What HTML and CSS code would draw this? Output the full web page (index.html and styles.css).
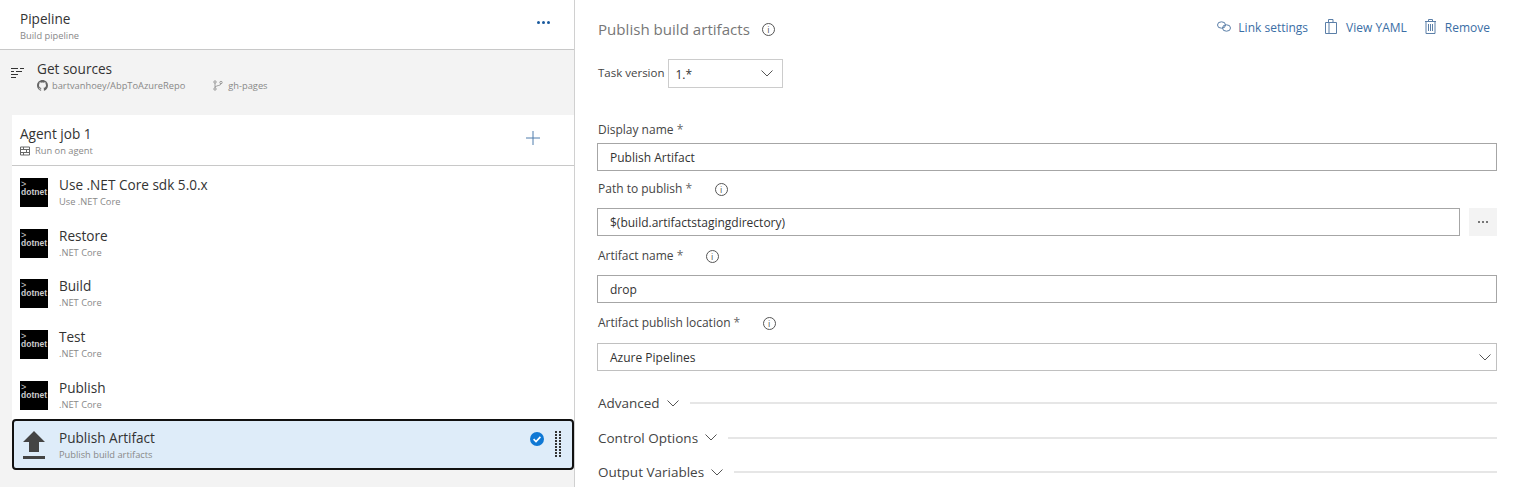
FILE: index.html
```html
<!DOCTYPE html>
<html lang="en">
<head>
    <meta charset="UTF-8">
    <title>Pipeline</title>
    <link rel="stylesheet" href="styles.css">
</head>
<body>
    <div class="left-pane">
        <div class="pipeline-head">
            <div>
                <div class="title">Pipeline</div>
                <div class="sub">Build pipeline</div>
            </div>
            <div class="more-dots"><i></i><i></i><i></i></div>
        </div>
        <div class="sources">
            <svg class="sources-icon" width="13" height="11" viewBox="0 0 13 11" fill="none" stroke="#333" stroke-width="1">
                <path d="M0 1.500h7M9 1.500h4M0 4.500h3M5 4.500h6M0 7.500h7M0 10.500h5"/>
            </svg>
            <div>
                <div class="title">Get sources</div>
                <div class="sub source-meta">
                    <svg class="meta-icon" width="11" height="11" viewBox="0 0 16 16" fill="#666">
                        <path d="M8 0C3.6 0 0 3.6 0 8c0 3.5 2.3 6.5 5.5 7.6.4.1.5-.2.5-.4v-1.4c-2.2.5-2.7-1-2.7-1-.4-.9-.9-1.2-.9-1.2-.7-.5.1-.5.1-.5.8.1 1.2.8 1.2.8.7 1.2 1.9.9 2.3.7.1-.5.3-.9.5-1.1-1.8-.2-3.6-.9-3.6-4 0-.9.3-1.6.8-2.1-.1-.2-.4-1 .1-2.1 0 0 .7-.2 2.2.8.6-.2 1.3-.3 2-.3s1.4.1 2 .3c1.500-1 2.2-.8 2.2-.8.4 1.1.2 1.9.1 2.1.5.6.8 1.3.8 2.1 0 3.1-1.9 3.7-3.7 3.9.3.3.6.8.6 1.5v2.2c0 .2.1.5.6.4C13.7 14.5 16 11.5 16 8c0-4.4-3.6-8-8-8z"/>
                    </svg>
                    <span class="repo">bartvanhoey/AbpToAzureRepo</span>
                    <svg class="meta-icon branch-icon" width="10" height="11" viewBox="0 0 10 11" fill="none" stroke="#888" stroke-width=".8">
                        <circle cx="2" cy="2" r="1.2"/><circle cx="2" cy="9" r="1.2"/><circle cx="8" cy="2.5" r="1.2"/>
                        <path d="M2 3.2v4.6M8 3.7c0 2-4 1.5-6 3.3"/>
                    </svg>
                    <span>gh-pages</span>
                </div>
            </div>
        </div>
        <div class="job-card">
            <div class="job-head">
                <div>
                    <div class="title">Agent job 1</div>
                    <div class="sub source-meta">
                        <svg class="job-icon" width="10" height="10" viewBox="0 0 10 10" fill="none" stroke="#666" stroke-width="1">
                            <path d="M.5 1h9v8h-9zM.5 3.500h9M.5 6.500h9M3.500 1v2.500M6.500 3.500v3M3.500 6.500V9"/>
                        </svg>
                        <span>Run on agent</span>
                    </div>
                </div>
                <svg class="add-icon" width="14" height="14" viewBox="0 0 14 14" stroke="#4f7cac" stroke-width="1"><path d="M7 0v14M0 7h14"/></svg>
            </div>
            <div class="task">
                <div class="dotnet"><span class="prompt">&gt;</span><span class="dotnet-word">dotnet</span></div>
                <div><div class="title">Use .NET Core sdk 5.0.x</div><div class="sub">Use .NET Core</div></div>
            </div>
            <div class="task">
                <div class="dotnet"><span class="prompt">&gt;</span><span class="dotnet-word">dotnet</span></div>
                <div><div class="title">Restore</div><div class="sub">.NET Core</div></div>
            </div>
            <div class="task">
                <div class="dotnet"><span class="prompt">&gt;</span><span class="dotnet-word">dotnet</span></div>
                <div><div class="title">Build</div><div class="sub">.NET Core</div></div>
            </div>
            <div class="task">
                <div class="dotnet"><span class="prompt">&gt;</span><span class="dotnet-word">dotnet</span></div>
                <div><div class="title">Test</div><div class="sub">.NET Core</div></div>
            </div>
            <div class="task">
                <div class="dotnet"><span class="prompt">&gt;</span><span class="dotnet-word">dotnet</span></div>
                <div><div class="title">Publish</div><div class="sub">.NET Core</div></div>
            </div>
            <div class="task task-selected">
                <svg class="upload-icon" width="22" height="28" viewBox="0 0 22 28" fill="#444">
                    <path d="M11 0 22 11H16V21H6V11H0z"/><rect x="0" y="25" width="22" height="3"/>
                </svg>
                <div class="task-text"><div class="title">Publish Artifact</div><div class="sub">Publish build artifacts</div></div>
                <svg class="check-icon" width="14" height="14" viewBox="0 0 14 14">
                    <circle cx="7" cy="7" r="7" fill="#0f78d4"/>
                    <path d="M3.600 7.200 6 9.500l4.400-4.600" fill="none" stroke="#fff" stroke-width="1.600"/>
                </svg>
                <div class="grip"><i></i><i></i><i></i><i></i><i></i><i></i><i></i><i></i><i></i><i></i><i></i><i></i><i></i><i></i><i></i><i></i><i></i><i></i></div>
            </div>
        </div>
    </div>

    <div class="right-pane">
        <div class="task-head">
            <div class="heading">
                <span>Publish build artifacts</span>
                <span class="info info-head">i</span>
            </div>
            <div class="actions">
                <a class="action action-link">
                    <svg width="14" height="11" viewBox="0 0 14 11" fill="none" stroke="#5b7fa8" stroke-width="1">
                        <ellipse cx="4.500" cy="4" rx="4" ry="3.200"/><ellipse cx="9.500" cy="7" rx="4" ry="3.200"/>
                    </svg>
                    Link settings
                </a>
                <a class="action">
                    <svg width="12" height="15" viewBox="0 0 12 15" fill="none" stroke="#5b7fa8" stroke-width="1">
                        <path d="M.5 3.500h11v11H.5zM4 3.500v11M3.500 3.500v-3h4.500v3"/>
                    </svg>
                    View YAML
                </a>
                <a class="action">
                    <svg width="11" height="15" viewBox="0 0 11 15" fill="none" stroke="#5b7fa8" stroke-width="1">
                        <path d="M0 2.500h11M3.500 2.500v-2h4v2M1 2.500v12h9v-12M3.500 5v7M5.500 5v7M7.500 5v7"/>
                    </svg>
                    Remove
                </a>
            </div>
        </div>

        <div class="version-row">
            <label class="label version-label">Task version</label>
            <div class="version-select">
                <span class="version-value">1.*</span>
                <svg class="chevron" width="12" height="7" viewBox="0 0 12 7" fill="none" stroke="#555" stroke-width="1"><path d="M.5.5 6 6l5.500-5.500"/></svg>
            </div>
        </div>

        <div class="field field-first">
            <div class="label">Display name <span class="req">*</span></div>
            <div class="input">Publish Artifact</div>
        </div>
        <div class="field field-path">
            <div class="label">Path to publish <span class="req">*</span><span class="info">i</span></div>
            <div class="path-row">
                <div class="input">$(build.artifactstagingdirectory)</div>
                <div class="browse"><i></i><i></i><i></i></div>
            </div>
        </div>
        <div class="field field-name">
            <div class="label">Artifact name <span class="req">*</span><span class="info">i</span></div>
            <div class="input">drop</div>
        </div>
        <div class="field field-loc">
            <div class="label">Artifact publish location <span class="req">*</span><span class="info">i</span></div>
            <div class="input input-select">
                <span>Azure Pipelines</span>
                <svg class="chevron" width="12" height="7" viewBox="0 0 12 7" fill="none" stroke="#555" stroke-width="1"><path d="M.5.5 6 6l5.500-5.500"/></svg>
            </div>
        </div>

        <div class="section section-first">
            <span>Advanced</span>
            <svg width="12" height="7" viewBox="0 0 12 7" fill="none" stroke="#555" stroke-width="1"><path d="M.5.5 6 6l5.500-5.500"/></svg>
            <div class="rule"></div>
        </div>
        <div class="section">
            <span>Control Options</span>
            <svg width="12" height="7" viewBox="0 0 12 7" fill="none" stroke="#555" stroke-width="1"><path d="M.5.5 6 6l5.500-5.500"/></svg>
            <div class="rule"></div>
        </div>
        <div class="section">
            <span>Output Variables</span>
            <svg width="12" height="7" viewBox="0 0 12 7" fill="none" stroke="#555" stroke-width="1"><path d="M.5.5 6 6l5.500-5.500"/></svg>
            <div class="rule"></div>
        </div>
    </div>
</body>
</html>
```

FILE: styles.css
```css
html, body {
    height: 100%;
}
body {
    margin: 0;
    display: flex;
    height: 487px;
    overflow: hidden;
    font-family: 'Open Sans', sans-serif;
    font-size: 12px;
    color: #333;
    background: #fff;
}
.left-pane {
    width: 574px;
    background: #f3f3f3;
    border-right: 1px solid #d0d0d0;
    flex-shrink: 0;
}
.title {
    font-size: 13.600px;
    line-height: 17px;
    margin: -1px 0 1px;
    color: #333;
}
.sub {
    font-size: 9.300px;
    line-height: 15px;
    color: #888;
}
.pipeline-head {
    height: 50px;
    box-sizing: border-box;
    background: #fff;
    border-bottom: 1px solid #c8c8c8;
    padding: 11px 24px 0 20px;
    display: flex;
    justify-content: space-between;
}
.more-dots {
    display: flex;
    gap: 2px;
    padding-top: 10px;
}
.more-dots i {
    width: 3px;
    height: 3px;
    border-radius: 50%;
    background: #1a5a9e;
}
.sources {
    height: 65px;
    box-sizing: border-box;
    padding: 11px 0 0 11px;
    display: flex;
    gap: 13px;
}
.sources-icon {
    margin-top: 6px;
}
.source-meta {
    display: flex;
    align-items: center;
    margin-top: 1px;
}
.meta-icon {
    margin-right: 4px;
}
.repo {
    margin-right: 28px;
}
.branch-icon {
    margin-right: 5px;
}
.job-head .source-meta {
    margin-top: 0;
}
.job-icon {
    margin-right: 5px;
}
.job-card {
    margin-left: 12px;
    background: #fff;
}
.job-head {
    height: 51px;
    box-sizing: border-box;
    border-bottom: 1px solid #c8c8c8;
    padding: 11px 34px 0 8px;
    display: flex;
    justify-content: space-between;
}
.add-icon {
    margin-top: 5px;
}
.task {
    height: 50.700px;
    box-sizing: border-box;
    padding: 11px 0 0 8px;
    display: flex;
    gap: 11px;
}
.dotnet {
    width: 28px;
    height: 29px;
    margin-top: 1px;
    background: #000;
    color: #ccc;
    display: flex;
    flex-direction: column;
    font-family: 'Liberation Sans', sans-serif;
    font-weight: bold;
    font-size: 8.500px;
    line-height: 9px;
    overflow: hidden;
}
.prompt {
    padding: 2px 0 0 1px;
    font-size: 9px;
    font-weight: normal;
}
.dotnet-word {
    padding-left: 1px;
    margin-top: -1px;
}
.task-selected {
    height: 51px;
    background: #deecf9;
    border: 2px solid #111;
    border-radius: 4px;
    padding: 9px 11px 0 6px;
    align-items: flex-start;
}
.upload-icon {
    margin: 1px 0 0 3px;
}
.task-text {
    flex: 1;
    margin-left: 3px;
}
.check-icon {
    margin-top: 2px;
}
.grip {
    display: grid;
    grid-template-columns: 2px 2px;
    grid-auto-rows: 2px;
    column-gap: 2px;
    row-gap: 1px;
    width: 6px;
    margin-top: 1px;
}
.grip i {
    background: #333;
}
.right-pane {
    flex: 1;
    padding: 0 17px 0 22px;
    min-width: 0;
}
.task-head {
    height: 59px;
    display: flex;
    justify-content: space-between;
    align-items: flex-start;
}
.heading {
    margin: 18px 0 0 1px;
    font-size: 15.100px;
    line-height: 22px;
    color: #777;
    display: flex;
    align-items: center;
}
.info {
    display: inline-block;
    width: 13px;
    height: 13px;
    box-sizing: border-box;
    border: 1px solid #555;
    border-radius: 50%;
    font-size: 9px;
    line-height: 11px;
    text-align: center;
    color: #555;
    margin-left: 22.500px;
    vertical-align: 0;
}
.info-head {
    margin-left: 12px;
}
.actions {
    display: flex;
    gap: 18px;
    padding: 18px 7px 0 0;
}
.action {
    display: flex;
    align-items: center;
    gap: 9px;
    font-size: 12px;
    line-height: 20px;
    color: #3a6ea5;
}
.action svg {
    margin-bottom: 4px;
}
.action-link {
    gap: 7px;
    margin-right: -1px;
}
.version-row {
    display: flex;
    align-items: center;
    gap: 3px;
    height: 29px;
    padding-left: 1px;
}
.label {
    font-size: 12px;
    line-height: 18px;
    color: #444;
    padding-left: 1px;
}
.version-label {
    font-size: 11.500px;
    padding: 0 0 2px 0;
}
.req {
    color: #666;
}
.version-select {
    width: 115px;
    height: 29px;
    box-sizing: border-box;
    border: 1px solid #ccc;
    padding: 0 9px 0 7px;
    display: flex;
    align-items: center;
    justify-content: space-between;
    font-size: 12px;
}
.version-value {
    padding-top: 2px;
}
.field-first {
    margin-top: 33px;
}
.field-path {
    margin-top: 9px;
}
.field-name {
    margin-top: 11px;
}
.field-loc {
    margin-top: 11px;
}
.field .label {
    margin-bottom: 4px;
}
.field-path .label,
.field-name .label {
    margin-bottom: 10px;
}
.field-loc .label {
    margin-bottom: 11px;
}
.input {
    height: 28px;
    box-sizing: border-box;
    border: 1px solid #a6a6a6;
    padding: 0 12px;
    display: flex;
    align-items: center;
    font-size: 12px;
    color: #333;
}
.input-select {
    justify-content: space-between;
    padding-right: 5px;
    border-color: #c0c0c0;
}
.path-row {
    display: flex;
    gap: 9px;
}
.path-row .input {
    flex: 1;
}
.browse {
    width: 28px;
    height: 28px;
    background: #f3f3f3;
    display: flex;
    align-items: center;
    justify-content: center;
    gap: 2px;
}
.browse i {
    width: 2px;
    height: 2px;
    background: #777;
}
.section {
    display: flex;
    align-items: center;
    gap: 7px;
    height: 20px;
    margin-top: 14.500px;
    padding-left: 1px;
    font-size: 13.500px;
    color: #444;
}
.section-first {
    margin-top: 22px;
}
.rule {
    flex: 1;
    height: 2px;
    background: #e6e6e6;
    margin-left: 4px;
}
```
